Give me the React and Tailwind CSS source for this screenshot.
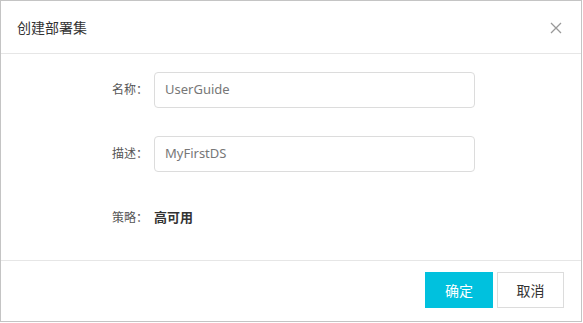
export default function App() {
  const font = { fontFamily: '"Noto Sans", "Noto Sans CJK SC", sans-serif' };
  return (
    <div className="w-[583px] h-[323px] bg-white" style={font}>
      <div className="w-[582px] h-[322px] border border-[#c4c4c4] flex flex-col bg-white">
        <div className="h-[53px] shrink-0 border-b border-[#e6e6e6] flex items-center justify-between pl-[16px] pr-[19px]">
          <span className="text-[14px] text-[#333]">创建部署集</span>
          <svg width="12" height="12" viewBox="0 0 12 12" className="mt-[1px]">
            <path d="M1 1L11 11M11 1L1 11" stroke="#999" strokeWidth="1.3" fill="none" />
          </svg>
        </div>
        <div className="flex-1 flex flex-col pt-[18px] gap-[28px]">
          <div className="flex items-center h-[36px]">
            <div className="w-[147px] text-right text-[12px] text-[#555]">名称：</div>
            <div className="ml-[6px] w-[321px] h-[36px] border border-[#dcdcdc] rounded-[4px] flex items-center pl-[10px] text-[13px] text-[#777]">UserGuide</div>
          </div>
          <div className="flex items-center h-[36px]">
            <div className="w-[147px] text-right text-[12px] text-[#555]">描述：</div>
            <div className="ml-[6px] w-[321px] h-[36px] border border-[#dcdcdc] rounded-[4px] flex items-center pl-[10px] text-[13px] text-[#777]">MyFirstDS</div>
          </div>
          <div className="flex items-center h-[36px]">
            <div className="w-[147px] text-right text-[12px] text-[#555]">策略：</div>
            <div className="ml-[6px] text-[13px] text-[#333] font-semibold">高可用</div>
          </div>
        </div>
        <div className="h-[61px] shrink-0 border-t border-[#e6e6e6] flex justify-end items-start pt-[11px] pr-[17px] gap-[4px]">
          <button className="w-[68px] h-[36px] bg-[#00c1de] text-white text-[14px]">确定</button>
          <button className="w-[67px] h-[36px] border border-[#dcdcdc] text-[#333] text-[14px] bg-white">取消</button>
        </div>
      </div>
    </div>
  );
}
